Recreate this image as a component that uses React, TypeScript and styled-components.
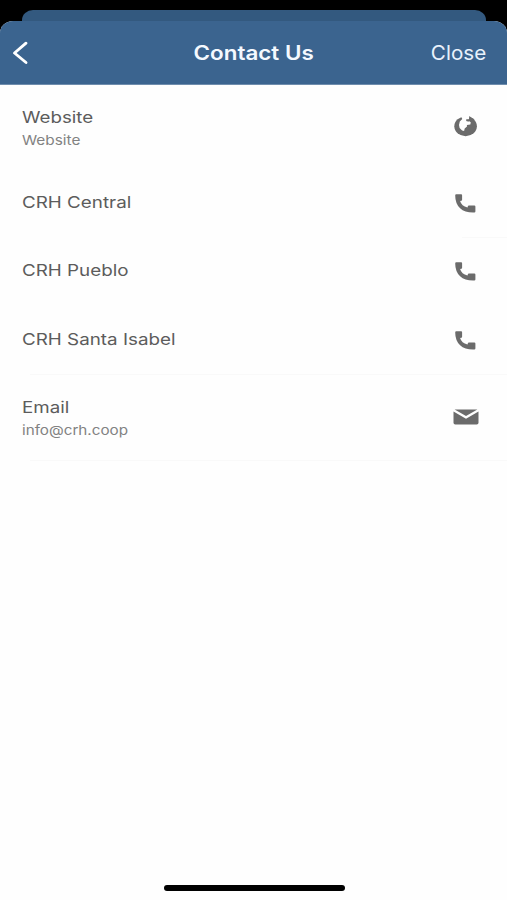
import React from "react";
import styled, { createGlobalStyle } from "styled-components";

const Global = createGlobalStyle`
  * { box-sizing: border-box; }
  body { margin: 0; background: #fefefe; font-family: Inter, "Liberation Sans", sans-serif; }
`;

const Screen = styled.div`
  width: 507px;
  height: 900px;
  background: #000;
  padding-top: 10px;
  display: flex;
  flex-direction: column;
  overflow: hidden;
`;

const BackCard = styled.div`
  height: 29px;
  margin: 0 21px -18px 22px;
  flex: none;
  background: #33597f;
  border-radius: 11px 11px 0 0 / 10px 10px 0 0;
`;

const Sheet = styled.main`
  flex: 1;
  display: flex;
  flex-direction: column;
  background: #fefefe;
  border-radius: 13px 13px 0 0 / 12px 12px 0 0;
  overflow: hidden;
  z-index: 1;
`;

const Header = styled.header`
  height: 64px;
  flex: none;
  display: grid;
  grid-template-columns: 1fr auto 1fr;
  align-items: center;
  padding: 0 21px 0 12px;
  background: #3b648f;
  border-bottom: 1px solid #6f8dad;
  color: #fff;
`;

const BackButton = styled.button`
  border: 0;
  padding: 0;
  background: none;
  display: flex;
  color: inherit;
`;

const Stretch = styled.span<{ $x: number; $from?: string }>`
  display: inline-block;
  white-space: nowrap;
  transform: scaleX(${(p) => p.$x});
  transform-origin: ${(p) => p.$from ?? "left"} center;
`;

const Title = styled.h1`
  margin: 0 -5px 0 5px;
  font-size: 20px;
  line-height: 24px;
  font-weight: 600;
  color: #f4f9ff;
`;

const CloseButton = styled.button`
  justify-self: end;
  border: 0;
  padding: 0;
  background: none;
  color: #e9f2fc;
  font: 400 19.5px/24px Inter, sans-serif;
`;

const List = styled.ul`
  margin: 0;
  padding: 0;
  list-style: none;
  flex: 1;
`;

const Row = styled.li<{ $height: number; $line?: number }>`
  height: ${(p) => p.$height}px;
  display: flex;
  justify-content: space-between;
  align-items: flex-start;
  padding: 21px 28px 0 22px;
  background: linear-gradient(${(p) => (p.$line ? "#f9f9f9, #f9f9f9" : "transparent, transparent")})
    ${(p) => p.$line ?? 0}px 100% / 100% 1px no-repeat;
`;

const Name = styled.div`
  font-size: 16.3px;
  line-height: 22px;
  color: #5c5c5c;
`;

const Detail = styled.div`
  margin-top: 2px;
  font-size: 13.3px;
  line-height: 20px;
  color: #828282;
`;

const IconBox = styled.div<{ $top: number }>`
  width: 27px;
  padding-top: ${(p) => p.$top}px;
  display: flex;
  justify-content: center;
  color: #6b6b6b;
`;

const Footer = styled.footer`
  height: 15px;
  flex: none;
  display: flex;
  justify-content: center;
`;

const HomeBar = styled.div`
  width: 181px;
  height: 6px;
  margin-left: 1px;
  border-radius: 3px;
  background: #000;
`;

const Globe = () => (
  <svg width="24" height="21" viewBox="0 0 24 21">
    <ellipse cx="11.6" cy="10.3" rx="11.3" ry="9.9" fill="currentColor" />
    <path d="M6.8 0 L8.3 3 L5.8 5.5 L5 9 L5.6 12 L8.1 14.6 L10.1 14.9 L10.7 12.4 L13 10.6 L12.9 9 L16.3 8.4 L16.8 6.4 L15.6 5.3 L12.6 5 L12.3 3.6 L15 3.3 L15.3 0 Z" fill="#fefefe" />
    <path d="M12.2 3.4 15.6 3.7 15.3 5.6 12.6 5.3ZM15 0 20 3 19 6 16 4Z" fill="currentColor" />
  </svg>
);

const Phone = () => (
  <svg width="21" height="19" viewBox="0 0 21 19">
    <path d="M1.2.3h4.9q1 0 1 1v4.4q0 .9-.8 1l-1.2.2q1.4 5 7.4 6.6l.3-1.1q.2-.8 1.1-.8h5.4q1.1 0 1.1 1v4.9q0 1-1.2 1Q10 18.8 5.1 14.2.2 9.5.2 1.4.2.3 1.2.3Z" fill="currentColor" />
  </svg>
);

const Mail = () => (
  <svg width="26" height="16" viewBox="0 0 26 16">
    <path d="M1.6.5h22.8L13 7.1Z" fill="currentColor" />
    <path d="M.5 2.6 13 9.8l12.5-7.2v11.1q0 1.8-1.8 1.8H2.3q-1.8 0-1.8-1.8Z" fill="currentColor" />
  </svg>
);

const contacts = [
  { name: "Website", x: 1.15, detail: "Website", dx: 1.155, height: 85, icon: <Globe />, top: 10 },
  { name: "CRH Central", x: 1.155, height: 68, icon: <Phone />, top: 3, line: 462 },
  { name: "CRH Pueblo", x: 1.155, height: 69, icon: <Phone />, top: 3 },
  { name: "CRH Santa Isabel", x: 1.155, height: 68, icon: <Phone />, top: 3, line: 30 },
  { name: "Email", x: 1.15, detail: "info@crh.coop", dx: 1.145, height: 86, icon: <Mail />, top: 13, line: 30 },
];

export default function App() {
  return (
    <Screen>
      <Global />
      <BackCard />
      <Sheet>
        <Header>
          <BackButton aria-label="Back">
            <svg width="18" height="24" viewBox="0 0 18 24">
              <path d="M14 2.2 2.5 12 14 21.5" fill="none" stroke="#fff" strokeWidth="2.9" strokeLinecap="round" strokeLinejoin="round" />
            </svg>
          </BackButton>
          <Title><Stretch $x={1.12} $from="center">Contact Us</Stretch></Title>
          <CloseButton><Stretch $x={1.06} $from="right">Close</Stretch></CloseButton>
        </Header>
        <List>
          {contacts.map((c) => (
            <Row key={c.name} $height={c.height} $line={c.line}>
              <div>
                <Name><Stretch $x={c.x}>{c.name}</Stretch></Name>
                {c.detail && <Detail><Stretch $x={c.dx}>{c.detail}</Stretch></Detail>}
              </div>
              <IconBox $top={c.top}>{c.icon}</IconBox>
            </Row>
          ))}
        </List>
        <Footer><HomeBar /></Footer>
      </Sheet>
    </Screen>
  );
}
